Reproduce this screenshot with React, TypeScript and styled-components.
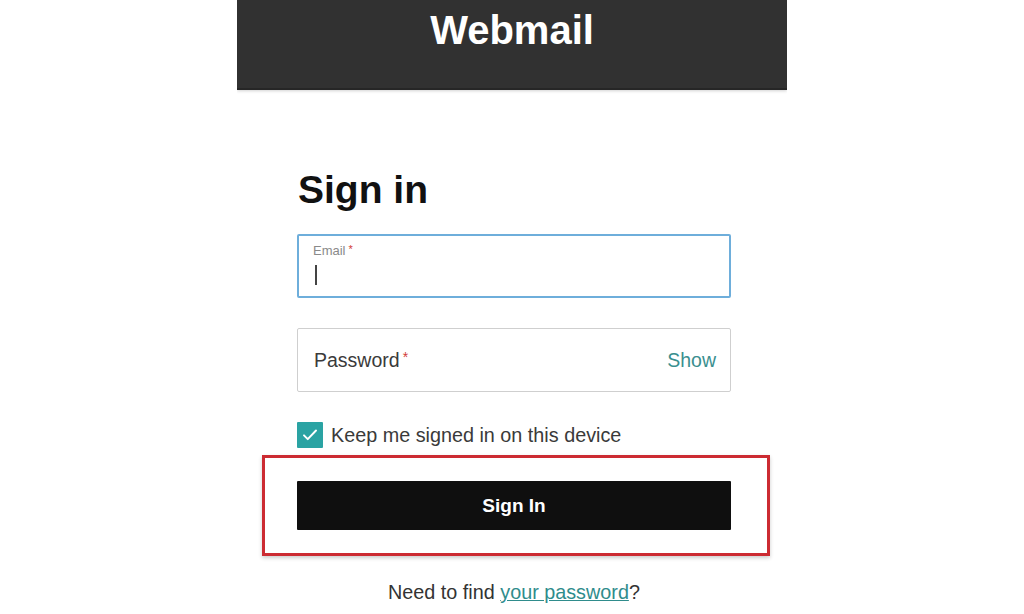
import styled, { createGlobalStyle } from "styled-components"

const GlobalStyle = createGlobalStyle`
  body {
    margin: 0;
    background: #ffffff;
    font-family: "Liberation Sans", Arial, sans-serif;
    color: #2b2b2b;
  }
`

const Page = styled.div`
  width: 550px;
  margin: 0 auto;
  height: 614px;
  overflow: hidden;
`

const Header = styled.header`
  height: 90px;
  background: #313131;
  border-bottom: 2px solid #262626;
  box-sizing: border-box;
  box-shadow: 0 1px 3px rgba(0, 0, 0, 0.18);
  display: flex;
  justify-content: center;
`

const Brand = styled.h1`
  margin: 8px 0 0;
  font-size: 40px;
  line-height: 44px;
  font-weight: bold;
  color: #ffffff;
`

const Form = styled.form`
  width: 434px;
  margin: 0 0 0 60px;
  padding-top: 80px;
  display: flex;
  flex-direction: column;
`

const Title = styled.h2`
  margin: 0 0 24px 1px;
  font-size: 39px;
  line-height: 40px;
  font-weight: bold;
  color: #111111;
`

const Field = styled.div<{ $focused?: boolean }>`
  box-sizing: border-box;
  height: 64px;
  border: ${({ $focused }) => ($focused ? "2px solid #6eaedb" : "1px solid #cfcfcf")};
  border-radius: 2px;
  display: flex;
  align-items: center;
  justify-content: space-between;
  padding: 0 14px 0 ${({ $focused }) => ($focused ? "14px" : "16px")};
  margin-bottom: 30px;
`

const FloatingLabel = styled.div`
  display: flex;
  flex-direction: column;
  align-self: stretch;
  padding-top: 7px;
`

const SmallLabel = styled.span`
  font-size: 13px;
  line-height: 16px;
  color: #8a8a8a;
`

const Label = styled.span`
  font-size: 19.5px;
  color: #3a3a3a;
`

const Required = styled.sup<{ $small?: boolean }>`
  color: #d23a3a;
  font-size: ${({ $small }) => ($small ? "11px" : "14px")};
  margin-left: 3px;
  vertical-align: top;
  position: relative;
  top: ${({ $small }) => ($small ? "-2px" : "0px")};
`

const Caret = styled.span`
  display: block;
  width: 2px;
  height: 20px;
  margin: 6px 0 0 2px;
  background: #444444;
`

const ShowButton = styled.span`
  font-size: 19.5px;
  color: #3a8f8f;
`

const CheckRow = styled.label`
  display: flex;
  align-items: center;
  gap: 8px;
  margin-top: 0;
  margin-bottom: 7px;
  font-size: 19.8px;
  color: #3a3a3a;
`

const CheckBox = styled.span`
  width: 26px;
  height: 26px;
  border-radius: 1px;
  background: #2aa3a3;
  display: flex;
  align-items: center;
  justify-content: center;
`

const Highlight = styled.div`
  margin: 0 -39px 0 -35px;
  padding: 23px 36px 23px 32px;
  border: 3px solid #cc2b32;
  box-shadow: 0 2px 4px rgba(0, 0, 0, 0.2);
`

const SubmitButton = styled.button`
  width: 100%;
  height: 49px;
  border: none;
  border-radius: 1px;
  background: #0f0f0f;
  color: #ffffff;
  font-family: "Liberation Sans", Arial, sans-serif;
  font-size: 19px;
  font-weight: bold;
  cursor: pointer;
`

const Footer = styled.p`
  margin: 24px 0 0;
  text-align: center;
  font-size: 19.8px;
  line-height: 24px;
  color: #333333;
`

const Link = styled.a`
  color: #2f8c8c;
  text-decoration: underline;
`

export default function App() {
  return (
    <>
      <GlobalStyle />
      <Page>
        <Header>
          <Brand>Webmail</Brand>
        </Header>
        <Form onSubmit={(e) => e.preventDefault()}>
          <Title>Sign in</Title>

          <Field $focused>
            <FloatingLabel>
              <SmallLabel>
                Email<Required $small>*</Required>
              </SmallLabel>
              <Caret />
            </FloatingLabel>
          </Field>

          <Field>
            <Label>
              Password<Required>*</Required>
            </Label>
            <ShowButton>Show</ShowButton>
          </Field>

          <CheckRow>
            <CheckBox>
              <svg width="18" height="18" viewBox="0 0 24 24" fill="none" stroke="#ffffff" strokeWidth="2.6" strokeLinecap="round" strokeLinejoin="round">
                <path d="M4 12.5l5 5L20 6" />
              </svg>
            </CheckBox>
            Keep me signed in on this device
          </CheckRow>

          <Highlight>
            <SubmitButton type="submit">Sign In</SubmitButton>
          </Highlight>

          <Footer>
            Need to find <Link href="#">your password</Link>?
          </Footer>
        </Form>
      </Page>
    </>
  )
}
